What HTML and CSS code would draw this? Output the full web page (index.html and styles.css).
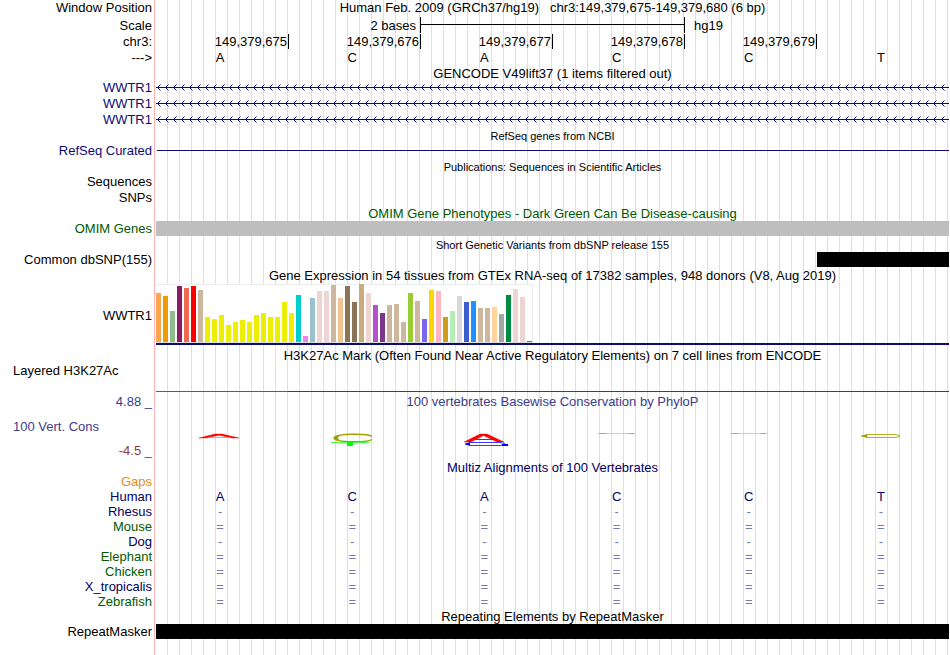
FILE: index.html
```html
<!DOCTYPE html>
<html lang="en">
  <head>
    <meta charset="utf-8">
    <title>Human chr3:149,379,675-149,379,680 - Genome Browser hg19</title>
    <link rel="stylesheet" href="styles.css">
  </head>
  <body>
    <main class="browser">
      <!-- ruler -->
      <div class="row">
        <div class="label">Window Position</div>
        <h1 class="title">Human Feb. 2009 (GRCh37/hg19) &nbsp; chr3:149,379,675-149,379,680 (6 bp)</h1>
      </div>
      <div class="row row-scale">
        <div class="label">Scale</div>
        <div class="scale">
          <span class="scale-size">2 bases</span>
          <span class="scale-bar"></span>
          <span class="scale-db">hg19</span>
        </div>
      </div>
      <div class="row">
        <div class="label">chr3:</div>
        <div class="bases ticks">
          <span>149,379,675</span><span>149,379,676</span><span>149,379,677</span><span>149,379,678</span><span>149,379,679</span><span></span>
        </div>
      </div>
      <div class="row">
        <div class="label">---&gt;</div>
        <div class="bases"><span>A</span><span>C</span><span>A</span><span>C</span><span>C</span><span>T</span></div>
      </div>

      <!-- gencode -->
      <h2 class="title title-tight">GENCODE V49lift37 (1 items filtered out)</h2>
      <div class="row">
        <div class="label navy">WWTR1</div>
        <svg class="gene">
          <defs>
            <pattern id="arrows" width="8" height="15" patternUnits="userSpaceOnUse">
              <path d="M4.5 4.5L1.5 7.5L4.5 10.5" fill="none" stroke="#0c0c78"/>
              <path d="M0 7.5H8" stroke="#0c0c78" shape-rendering="crispEdges"/>
            </pattern>
          </defs>
          <rect width="100%" height="15" fill="url(#arrows)"/>
        </svg>
      </div>
      <div class="row">
        <div class="label navy">WWTR1</div>
        <svg class="gene"><rect width="100%" height="15" fill="url(#arrows)"/></svg>
      </div>
      <div class="row">
        <div class="label navy">WWTR1</div>
        <svg class="gene"><rect width="100%" height="15" fill="url(#arrows)"/></svg>
      </div>

      <h2 class="title small">RefSeq genes from NCBI</h2>
      <div class="row">
        <div class="label navy">RefSeq Curated</div>
        <div class="intron"></div>
      </div>

      <h2 class="title small">Publications: Sequences in Scientific Articles</h2>
      <div class="row">
        <div class="label">Sequences</div>
      </div>
      <div class="row">
        <div class="label">SNPs</div>
      </div>

      <h2 class="title green">OMIM Gene Phenotypes - Dark Green Can Be Disease-causing</h2>
      <div class="row">
        <div class="label green">OMIM Genes</div>
        <div class="block block-gray"></div>
      </div>

      <h2 class="title small">Short Genetic Variants from dbSNP release 155</h2>
      <div class="row">
        <div class="label">Common dbSNP(155)</div>
        <div class="bases">
          <div class="block snp"></div>
        </div>
      </div>

      <h2 class="title">Gene Expression in 54 tissues from GTEx RNA-seq of 17382 samples, 948 donors (V8, Aug 2019)</h2>
      <div class="row row-gtex">
        <div class="label">WWTR1</div>
        <div class="gtex">
          <div class="gtex-bars" id="gtex"></div>
        </div>
      </div>

      <h2 class="title">H3K27Ac Mark (Often Found Near Active Regulatory Elements) on 7 cell lines from ENCODE</h2>
      <div class="row row-h3k">
        <div class="label label-left">Layered H3K27Ac</div>
        <div class="h3k"></div>
      </div>

      <!-- conservation -->
      <div class="row row-cons">
        <div class="cons-labels">
          <div class="label blue">4.88 _</div>
          <div class="label label-left blue">100 Vert. Cons</div>
          <div class="label maroon">-4.5 _</div>
        </div>
        <div>
          <h2 class="title blue">100 vertebrates Basewise Conservation by PhyloP</h2>
          <div class="bases logos">
            <span>
              <svg width="48" height="16" viewBox="0 0 48 16">
                <path d="M3 6L19 2H26L43 6H36L23 3.200L10 6Z" fill="#f00" stroke="#f00" stroke-width="0.400"/>
                <path d="M15 5.500H31" stroke="#f99"/>
              </svg>
            </span>
            <span>
              <svg width="48" height="16" viewBox="0 0 48 16">
                <path d="M44 4.500C40 1.500 8 1 6 6C8 11 40 10.500 44 7.500" fill="none" stroke="#a0a000" stroke-width="1.300"/>
                <path d="M10 3.200C4 4.500 4 7.500 10 8.800L13 8.500C9 7 9 5 13 3.500Z" fill="#a0a000"/>
                <path d="M3 10.500H41" stroke="#4f4"/>
                <path d="M19 10H25V14H19Z" fill="#0f0"/>
              </svg>
            </span>
            <span>
              <svg width="48" height="16" viewBox="0 0 48 16">
                <path d="M4 10L20 2H27L44 10H37L23.500 3.500L11 10Z" fill="#f00" stroke="#f00" stroke-width="0.400"/>
                <path d="M14 7.500H34" stroke="#f00"/>
                <path d="M45 11.500L40 10.500H10L6 12L10 13.500H40L46 12.500" fill="none" stroke="#22f" stroke-width="0.900"/>
                <path d="M5 11.500L10 10.500V13.500L5 12.500ZM42 12H48V14H42Z" fill="#00f"/>
              </svg>
            </span>
            <span>
              <svg width="48" height="16" viewBox="0 0 48 16">
                <path d="M5 1.500H43" stroke="#d4d490"/>
                <path d="M6 1.500H13M35 1.500H41" stroke="#b4b450"/>
              </svg>
            </span>
            <span>
              <svg width="48" height="16" viewBox="0 0 48 16">
                <path d="M5 1.500H43" stroke="#d4d490"/>
                <path d="M6 1.500H13M35 1.500H41" stroke="#b4b450"/>
              </svg>
            </span>
            <span>
              <svg width="48" height="16" viewBox="0 0 48 16">
                <path d="M43 3.500L38 2.500H10L6 4L10 5.500H38L43 4.500" fill="none" stroke="#b0b020"/>
                <path d="M4 3.500L10 2.500V5.500L4 4.500Z" fill="#a0a000"/>
              </svg>
            </span>
          </div>
        </div>
      </div>

      <!-- multiz -->
      <h2 class="title title-tight darkblue">Multiz Alignments of 100 Vertebrates</h2>
      <div class="align">
        <div class="row">
          <div class="label orange">Gaps</div>
        </div>
        <div class="row">
          <div class="label darkblue">Human</div>
          <div class="bases darkblue"><span>A</span><span>C</span><span>A</span><span>C</span><span>C</span><span>T</span></div>
        </div>
        <div class="row">
          <div class="label darkblue">Rhesus</div>
          <div class="bases pale"><span>-</span><span>-</span><span>-</span><span>-</span><span>-</span><span>-</span></div>
        </div>
        <div class="row">
          <div class="label green">Mouse</div>
          <div class="bases pale"><span>=</span><span>=</span><span>=</span><span>=</span><span>=</span><span>=</span></div>
        </div>
        <div class="row">
          <div class="label darkblue">Dog</div>
          <div class="bases pale"><span>-</span><span>-</span><span>-</span><span>-</span><span>-</span><span>-</span></div>
        </div>
        <div class="row">
          <div class="label green">Elephant</div>
          <div class="bases pale"><span>=</span><span>=</span><span>=</span><span>=</span><span>=</span><span>=</span></div>
        </div>
        <div class="row">
          <div class="label green">Chicken</div>
          <div class="bases pale"><span>=</span><span>=</span><span>=</span><span>=</span><span>=</span><span>=</span></div>
        </div>
        <div class="row">
          <div class="label darkblue">X_tropicalis</div>
          <div class="bases pale"><span>=</span><span>=</span><span>=</span><span>=</span><span>=</span><span>=</span></div>
        </div>
        <div class="row">
          <div class="label green">Zebrafish</div>
          <div class="bases pale"><span>=</span><span>=</span><span>=</span><span>=</span><span>=</span><span>=</span></div>
        </div>
      </div>

      <h2 class="title">Repeating Elements by RepeatMasker</h2>
      <div class="row">
        <div class="label">RepeatMasker</div>
        <div class="block"></div>
      </div>
    </main>

    <script>
      // one [color, height] pair per GTEx tissue
      const tissues = [
        ['#ffa54f', 49], ['#ee9a00', 46], ['#8fbc8f', 31], ['#8b1c62', 56], ['#ee6a50', 54], ['#ff0000', 56],
        ['#cdb79e', 52], ['#eeee00', 25], ['#eeee00', 23], ['#eeee00', 27], ['#eeee00', 17], ['#eeee00', 20],
        ['#eeee00', 22], ['#eeee00', 20], ['#eeee00', 27], ['#eeee00', 29], ['#eeee00', 25], ['#eeee00', 25],
        ['#eeee00', 40], ['#eeee00', 29], ['#00cdcd', 47], ['#ee82ee', 6], ['#9ac0cd', 44], ['#eed5d2', 51],
        ['#eed5d2', 51], ['#cdb79e', 57], ['#eec591', 44], ['#8b7355', 56], ['#8b7355', 40], ['#cdaa7d', 58],
        ['#eed5d2', 49], ['#b452cd', 37], ['#7a378b', 29], ['#cdb79e', 37], ['#cdb79e', 38], ['#cdb79e', 20],
        ['#9acd32', 49], ['#cdb79e', 41], ['#7a67ee', 23], ['#ffd700', 52], ['#ffb6c1', 51], ['#cd9b1d', 25],
        ['#b4eeb4', 31], ['#d9d9d9', 46], ['#3a5fcd', 40], ['#1e90ff', 41], ['#cdb79e', 34], ['#cdb79e', 34],
        ['#ffd39b', 35], ['#a6a6a6', 28], ['#008b45', 47], ['#eed5d2', 53], ['#eed5d2', 45], ['#ff00ff', 1]
      ];

      const gtexEl = document.getElementById('gtex');

      tissues.forEach(([color, height]) => {
        const bar = document.createElement('span');
        bar.style.backgroundColor = color;
        bar.style.height = height + 'px';
        gtexEl.appendChild(bar);
      });
    </script>
  </body>
</html>
```
FILE: styles.css
```css
body {
  margin: 0;
  background-color: #fff;
  color: #000;
  font-family: "Liberation Sans", Arial, Helvetica, sans-serif;
  font-size: 13px;
  line-height: 15px;
}

/* red edge of the label column, then a guide line every 12px */
.browser {
  min-height: 100vh;
  box-sizing: border-box;
  padding-right: 1px;
  background-image:
    linear-gradient(#ffb4b4, #ffb4b4),
    repeating-linear-gradient(to right, transparent 0, transparent 11px, #dcdcf5 11px, #dcdcf5 12px);
  background-position: 154px 0, 156px 0;
  background-size: 1px 100%, 100% 100%;
  background-repeat: no-repeat;
}

.row {
  display: grid;
  grid-template-columns: 156px minmax(0, 1fr);
  min-height: 16px;
}

.label {
  padding-right: 4px;
  text-align: right;
  white-space: nowrap;
}

.label-left {
  padding-left: 13px;
  text-align: left;
}

.title {
  margin: 0;
  padding: 1px 0 0 156px;
  font-size: 13px;
  font-weight: normal;
  line-height: 14px;
  text-align: center;
  white-space: nowrap;
}

.row .title {
  padding: 0;
  line-height: 15px;
}

.title-tight {
  line-height: 13px;
}

.small {
  font-size: 11px;
}

.navy { color: #0c0c78; }
.darkblue { color: #000064; }
.blue { color: #3c3c8c; }
.green { color: #005a00; }
.maroon { color: #8c3c3c; }
.orange { color: #e68c14; }
.pale { color: #7878b4; }

/* six equal columns, one per base */
.bases {
  display: grid;
  grid-template-columns: repeat(6, minmax(0, 1fr));
  text-align: center;
}

.bases > span {
  padding-right: 4px;
}

.bases.ticks {
  height: 15px;
  padding-right: 1px;
}

.ticks > span {
  padding-right: 1px;
  text-align: right;
}

.ticks > span + span {
  border-left: 1px solid #000;
}

.row-scale {
  min-height: 18px;
  align-items: center;
}

.scale {
  display: grid;
  grid-template-columns: repeat(3, minmax(0, 1fr));
  align-items: center;
  padding-right: 1px;
}

.scale-size {
  padding-right: 4px;
  text-align: right;
}

.scale-bar {
  height: 16px;
  margin-right: -1px;
  border: solid #000;
  border-width: 0 1px;
  background: linear-gradient(#000, #000) 0 7px / 100% 1px no-repeat;
}

.scale-db {
  padding-left: 10px;
}

.gene {
  display: block;
  width: 100%;
  height: 15px;
}

.intron {
  height: 1px;
  margin: 7px 0 0 1px;
  background-color: #0c0c78;
}

.block {
  height: 15px;
  background-color: #000;
}

.block-gray {
  background-color: #bebebe;
}

.snp {
  grid-column: 6;
}

.row-gtex {
  min-height: 65px;
}

.row-gtex .label {
  padding-top: 25px;
}

.gtex {
  height: 59px;
  padding-top: 1px;
  border-bottom: 2px solid #0c0c78;
}

.gtex-bars {
  display: inline-flex;
  align-items: flex-end;
  gap: 2px;
  height: 58px;
  padding-right: 1px;
  background-color: #fff;
  box-shadow: inset -1px 1px #eee, 0 1px #ddd;
  vertical-align: top;
}

.gtex-bars span {
  width: 5px;
}

.row-h3k {
  min-height: 31px;
}

.h3k {
  height: 1px;
  margin-top: 28px;
  background: linear-gradient(to right, #5a46dc 132px, #2d3ca5 132px);
}

.row-cons {
  min-height: 66px;
}

.cons-labels {
  display: flex;
  flex-direction: column;
  justify-content: space-between;
  padding-bottom: 2px;
}

.logos {
  padding-top: 23px;
}

.logos svg {
  display: block;
  margin: 0 auto;
}

.align .row {
  min-height: 15px;
}
```
